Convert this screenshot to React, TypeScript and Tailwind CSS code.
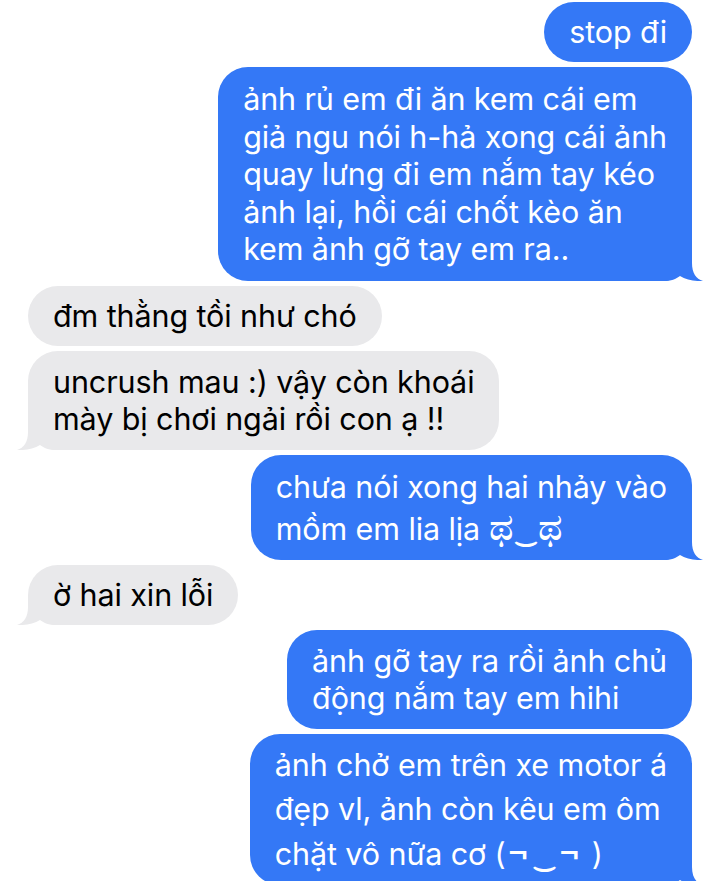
import React from "react";

type BubbleProps = {
  me?: boolean;
  tail?: boolean;
  lines: React.ReactNode[];
  className?: string;
};

function Tail({ me }: { me?: boolean }) {
  const fill = me ? "#3478f6" : "#e9e9eb";
  return (
    <svg
      width="42"
      height="30"
      viewBox="0 0 42 30"
      className={
        me
          ? "absolute bottom-0 -right-[12px]"
          : "absolute bottom-0 -left-[12px] -scale-x-100"
      }
    >
      <path
        d="M0,0 H30 V12 C30,22 34,28 41,30 C34,30.5 24,29 18,25 C14,28 9,30 2,30 H0 Z"
        fill={fill}
      />
    </svg>
  );
}

function Bubble({ me, tail, lines, className }: BubbleProps) {
  return (
    <div
      className={
        "relative rounded-[30px] px-[25px] " +
        (me
          ? "self-end bg-[#3478f6] text-white "
          : "self-start bg-[#e9e9eb] text-black ") +
        (className ?? "py-[11px] leading-[38px]")
      }
    >
      {tail && <Tail me={me} />}
      <div className="relative">
        {lines.map((l, i) => (
          <div key={i} className="whitespace-nowrap">
            {typeof l === "string" ? l.normalize("NFC") : l}
          </div>
        ))}
      </div>
    </div>
  );
}

export default function App() {
  return (
    <div
      className="w-[720px] h-[881px] overflow-hidden bg-white"
      style={{ fontFamily: "Inter, 'Noto Sans', 'DejaVu Sans', sans-serif" }}
    >
      <div className="flex flex-col gap-[5px] px-[28px] pt-[2px] text-[30.5px] tracking-[-0.1px]">
        <Bubble me lines={["stop \u0111i"]} />
        <Bubble
          me
          tail
          className="py-[13px] leading-[37.5px]"
          lines={[
            "ảnh rủ em đi ăn kem cái em",
            "giả ngu nói h-hả xong cái ảnh",
            "quay lưng đi em nắm tay kéo",
            "ảnh lại, hồi cái chốt kèo ăn",
            "kem ảnh gỡ tay em ra..",
          ]}
        />
        <Bubble lines={["đm thằng tồi như chó"]} />
        <Bubble
          tail
          className="py-[12px] leading-[37.5px]"
          lines={[
            "uncrush mau :) vậy còn khoái",
            "m\u00e0y b\u1ecb ch\u01a1i ng\u1ea3i r\u1ed3i con \u1ea1 !!",
          ]}
        />
        <Bubble
          me
          tail
          className="py-[11px] leading-[41px]"
          lines={[
            "chưa nói xong hai nhảy vào",
            <>
              {"mồm em lia lịa ".normalize("NFC")}
              <span className="text-[38px] leading-none">{"\u0ca5"}</span>
              <span className="leading-none">{"\u203f"}</span>
              <span className="text-[38px] leading-none">{"\u0ca5"}</span>
            </>,
          ]}
        />
        <Bubble tail lines={["\u1edd hai xin l\u1ed7i"]} />
        <Bubble
          me
          className="py-[12px] leading-[37.5px]"
          lines={["ảnh gỡ tay ra rồi ảnh chủ", "động nắm tay em hihi"]}
        />
        <Bubble
          me
          tail
          className="py-[9px] leading-[44px]"
          lines={[
            "ảnh chở em trên xe motor á",
            "đẹp vl, ảnh còn kêu em ôm",
            <>
              {"chặt vô nữa cơ (".normalize("NFC")}
              <span className="text-[40px] leading-none">{"\u00ac"}</span>
              <span className="leading-none">{"\u203f"}</span>
              <span className="text-[40px] leading-none">{"\u00ac"}</span>
              {" )"}
            </>,
          ]}
        />
      </div>
    </div>
  );
}
